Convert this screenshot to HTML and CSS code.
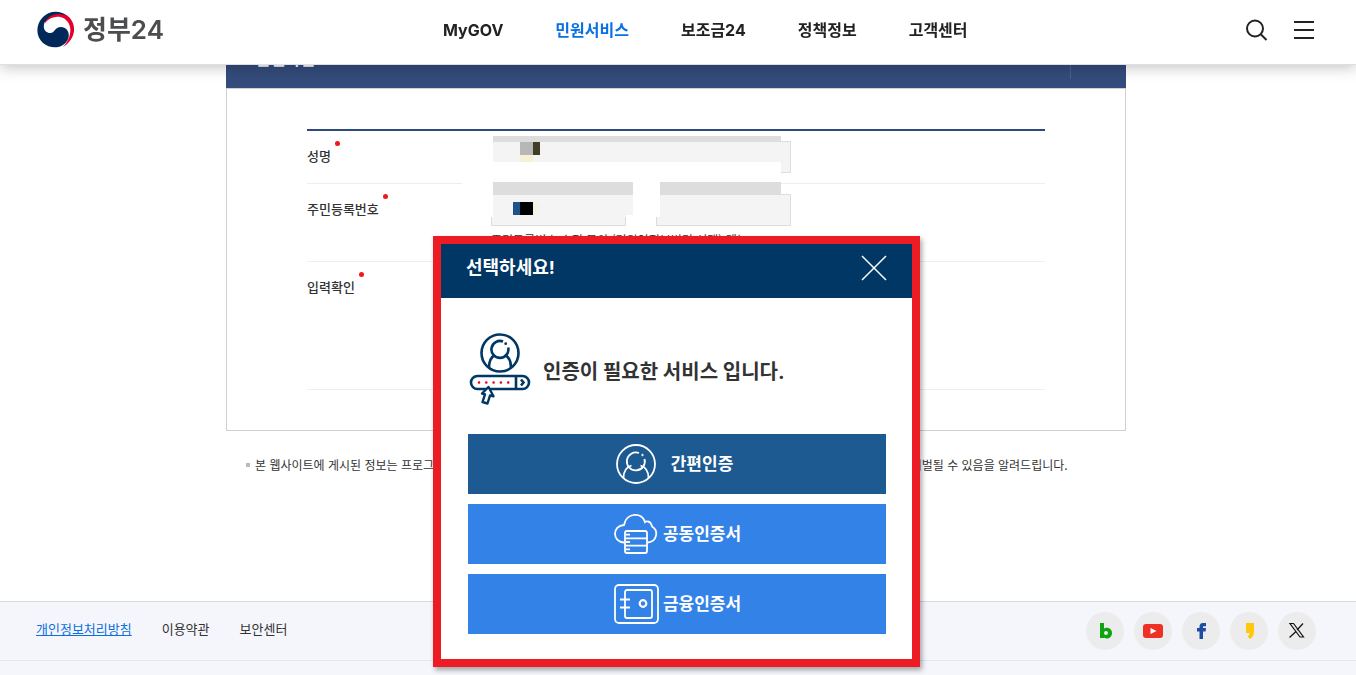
FILE: index.html
```html
<!DOCTYPE html>
<html lang="ko">
<head>
  <meta charset="UTF-8">
  <meta name="viewport" content="width=device-width,initial-scale=1.0">
  <title>정부24</title>
  <link rel="stylesheet" href="styles.css">
</head>
<body>

<header class="header">
  <a class="logo" href="#">
    <svg width="38" height="38" viewBox="0 0 38 38" aria-hidden="true">
      <path fill="#e4002b" d="M8 9C13 1 25-1 32 6c8 8 7 22-6 30 7-7 9-17 6-23C28 4 15 3 8 12z"/>
      <path fill="#00295a" d="M31 6C24-1 13-1 6 6c-8 8-7 20 0 26 7 6 19 6 24-2 4-6 1-14-6-14-7 0-6 7-12 6-6-1-7-9-2-14C15 3 24 1 31 6z"/>
    </svg>
    <span>정부24</span>
  </a>
  <nav class="nav">
    <a href="#">MyGOV</a>
    <a href="#" class="active">민원서비스</a>
    <a href="#">보조금24</a>
    <a href="#">정책정보</a>
    <a href="#">고객센터</a>
  </nav>
  <div class="tools">
    <button type="button" aria-label="검색">
      <svg width="24" height="24" viewBox="0 0 24 24" fill="none" stroke="#222" stroke-width="2"><circle cx="10" cy="10.5" r="8"/><path d="M15.5 16l6 6"/></svg>
    </button>
    <button type="button" aria-label="전체메뉴">
      <svg width="20" height="20" viewBox="0 0 20 20" fill="#222"><path d="M0 1h20v2H0zM0 9h20v2H0zM0 17h20v2H0z"/></svg>
    </button>
  </div>
</header>

<main class="main">
  <section class="panel">
    <h2 class="panel-title">본인확인</h2>
    <form class="panel-body">
      <div class="fields">
        <div class="field">
          <label for="name">성명<i class="req"></i></label>
          <div class="inputs"><input type="text" id="name" readonly></div>
        </div>
        <div class="field field-id">
          <label for="jumin1">주민등록번호<i class="req"></i></label>
          <div>
            <div class="inputs">
              <input type="text" id="jumin1" readonly>
              <input type="text" aria-label="주민등록번호 뒷자리" readonly>
            </div>
            <p class="hint">주민등록번호 수정 문의 (민원인정보변경 선택) 메뉴</p>
          </div>
        </div>
        <div class="field field-check">
          <span class="label">입력확인<i class="req"></i></span>
        </div>
        <!-- masked personal data -->
        <svg class="mask" width="319" height="81" viewBox="0 0 319 81" shape-rendering="crispEdges" aria-hidden="true">
          <path fill="#fff" d="M0 0h319v81H0z"/>
          <path fill="#ddd" d="M31 0h288v6H31zM31 46h140v13H31zM198 46h121v13H198z"/>
          <path fill="#f4f4f4" d="M31 6h288v20H31zM31 59h140v20h-7v2H31zM198 59h121v22H198z"/>
          <path fill="#b7b7b7" d="M58 6h13v13H58z"/>
          <path fill="#403f26" d="M71 6h7v13h-7z"/>
          <path fill="#f6f0d4" d="M58 19h13v7H58z"/>
          <path fill="#1f5288" d="M51 66h7v13h-7z"/>
          <path fill="#000" d="M58 66h13v13H58z"/>
          <path fill="#f4f3ea" d="M71 66h7v13h-7z"/>
        </svg>
      </div>
    </form>
  </section>
  <p class="note">본 웹사이트에 게시된 정보는 프로그램 또는 그 밖의 기술적 장치를 이용하여 무단으로 수집할 수 없고, 이를 위반시 관련 법령에 의해 처벌될 수 있음을 알려드립니다.</p>
</main>

<footer class="footer">
  <div class="footer-row">
    <div class="links">
      <a href="#" class="privacy">개인정보처리방침</a>
      <a href="#">이용약관</a>
      <a href="#">보안센터</a>
    </div>
    <div class="sns">
      <a href="#" aria-label="블로그"><svg width="38" height="38" viewBox="0 0 38 38"><path fill="#0fa30f" fill-rule="evenodd" d="M14 11h4v5.500c4-2 8 .5 8 4.500 0 5-5 7-8 4.500V26h-4zM20 19a2 2 0 1 0 0 4 2 2 0 0 0 0-4z"/></svg></a>
      <a href="#" aria-label="유튜브"><svg width="38" height="38" viewBox="0 0 38 38"><rect x="9" y="12" width="20" height="14" rx="3" fill="#ee3124"/><path fill="#fff" d="M16.500 16l6 3-6 3z"/></svg></a>
      <a href="#" aria-label="페이스북"><svg width="38" height="38" viewBox="0 0 38 38"><path fill="#1c4da1" d="M17.500 27v-7.500H15V16h2.500v-1.500c0-2.500 1.500-3.500 3.500-3.500h3v3.300h-2c-.8 0-1 .4-1 1V16h3l-.4 3.500H21V27z"/></svg></a>
      <a href="#" aria-label="카카오스토리"><svg width="38" height="38" viewBox="0 0 38 38"><path fill="#ffc80a" d="M16 11h8v8.500c0 3.500-1.500 6-4 7.500l-2.500-2.500c1.500-1 2-2 2-3.500H16z"/></svg></a>
      <a href="#" aria-label="X"><svg width="38" height="38" viewBox="0 0 38 38" fill="none" stroke="#111"><path stroke-width="1.200" d="M12 11.500h3.500L25.500 25H22zM25 11.500l-6 6.500M18 19.500L11.500 25.500"/></svg></a>
    </div>
  </div>
</footer>

<div class="overlay">
  <div class="modal" role="dialog" aria-labelledby="modal-title">
    <div class="modal-head">
      <h2 id="modal-title">선택하세요!</h2>
      <button type="button" class="close" aria-label="닫기">
        <svg width="26" height="26" viewBox="0 0 26 26" fill="none" stroke="#fff" stroke-width="1.500"><path d="M1 1l24 24M25 1L1 25"/></svg>
      </button>
    </div>
    <div class="modal-body">
      <div class="modal-msg">
        <svg width="62" height="72" viewBox="0 0 62 72" fill="none" stroke="#003764" stroke-width="2.600" aria-hidden="true">
          <circle cx="31" cy="20" r="18.500"/>
          <path d="M34 8.500A8.500 8.500 0 1 0 39.200 14.500"/>
          <circle cx="36.700" cy="10.700" r=".7" stroke-width="1.400"/>
          <path d="M20 35c0-7 2-11 6-13M42 35c0-7-2-11-6-13"/>
          <rect x="2" y="43" width="58" height="13" rx="6.500"/>
          <path d="M47 43v13M52 46.500l2.500 3-2.500 3"/>
          <path stroke="#e4002b" stroke-width="2.600" stroke-linecap="round" stroke-dasharray="0 7.300" d="M10 49.500h30"/>
          <path fill="#fff" stroke-width="2.400" stroke-linejoin="round" d="M19.500 54L13 60.500l3 .8L13.500 69l5 1.500L21 62.500l3.500.8z"/>
        </svg>
        <p>인증이 필요한 서비스 입니다.</p>
      </div>
      <div class="modal-btns">
        <button type="button" class="btn btn-simple">
          <svg width="42" height="42" viewBox="0 0 42 42" fill="none" stroke="#fff" stroke-width="1.800"><circle cx="21" cy="21" r="19"/><path d="M24 10a9 9 0 1 0 5.500 6"/><circle cx="27.500" cy="12" r=".8" fill="#fff" stroke-width=".8"/><path d="M8.500 35c0-7 3-11 8-12.500M33.500 35c0-7-3-11-8-12.500"/></svg>
          간편인증
        </button>
        <button type="button" class="btn">
          <svg width="46" height="42" viewBox="0 0 46 42" fill="none" stroke="#fff" stroke-width="1.800"><path d="M11 29.500C-1 29-1 12.500 11 12c2-13 19-13 21-3 0 0 1-1 3-.5 3 .5 4 5 4 5 7 4 5 15-4 16"/><rect x="12" y="18" width="22" height="22" rx="2"/><path d="M12 25.300h22M12 32.600h22M13 21.700h4M13 29h4M13 36.300h4"/></svg>
          공동인증서
        </button>
        <button type="button" class="btn">
          <svg width="46" height="42" viewBox="0 0 46 42" fill="none" stroke="#fff" stroke-width="1.800"><rect x="2" y="2" width="43" height="38" rx="4"/><rect x="12" y="7" width="27" height="28" rx="2"/><path d="M7 16.500h10M7 24.500h10"/><circle cx="30" cy="20.500" r="3.300" stroke-width="2.200"/></svg>
          금융인증서
        </button>
      </div>
    </div>
  </div>
</div>

</body>
</html>
```
FILE: styles.css
```css
* { box-sizing:border-box; }
body { margin:0; min-height:100vh; display:flex; flex-direction:column; background:#fff;
  color:#333; font-family:"Noto Sans CJK KR", sans-serif; font-size:13px; }
h2, p { margin:0; }
a { color:inherit; text-decoration:none; }
button { padding:0; border:none; background:none; font-family:inherit; cursor:pointer; }
svg { display:block; flex:none; }

/* Header */
.header { position:fixed; top:0; left:0; right:0; z-index:10; height:65px; padding:0 42px 4px 37px;
  display:flex; align-items:center; background:#fff; border-bottom:1px solid #dcdfe8;
  box-shadow:0 2px 14px rgba(0,0,0,0.25); }
.header, .modal { font-family:Inter, "Noto Sans CJK KR", sans-serif; }
.logo { flex:none; width:406px; display:flex; align-items:center; gap:8px; color:#4c4d4f;
  font-size:26px; line-height:36px; font-weight:600; }
.nav { display:flex; gap:52px; font-size:16px; line-height:24px; font-weight:700; color:#222; }
.nav .active { color:#0b70e5; }
.tools { display:flex; align-items:center; gap:25px; margin-left:auto; }

/* Form panel */
.main { padding:28px 4px 126px 0; }
.panel { max-width:900px; margin:0 auto; }
.panel-title { display:flex; justify-content:space-between; height:60px; padding:0 55px 0 30px;
  background:#344c7b; color:#fff; font-size:16px; line-height:60px; }
.panel-title::after { content:""; width:1px; height:51px; background:#4b618b; }
.panel-body { padding:40px 80px; border:1px solid #d0d0d0; }
.fields { position:relative; border-top:2px solid #2f4a7c; }
.field { display:flex; height:53px; border-bottom:1px solid #eee; }
.field-id { height:78px; }
.field-check { height:128px; }
.field label, .label { flex:none; width:184px; display:flex; gap:4px; line-height:50px; font-weight:500; }
.req { width:5px; height:5px; margin-top:10px; border-radius:50%; background:#f01818; }
.inputs { display:flex; gap:30px; width:300px; padding-top:10px; }
.inputs input { flex:1; min-width:0; height:32px; border:1px solid #ddd; background:#f4f4f4; }
.hint { padding-top:4px; font-size:12px; line-height:20px; white-space:nowrap; }
.mask { position:absolute; left:155px; top:5px; }
.note { max-width:860px; margin:24px auto 0; display:flex; align-items:center; gap:5px;
  font-size:12px; line-height:20px; white-space:nowrap; }
.note::before { content:""; width:4px; height:4px; background:#bbb; }

/* Footer */
.footer { flex:1; border-top:1px solid #d5dadb; background:#f5f6fb; }
.footer-row { display:flex; align-items:center; justify-content:space-between; height:59px;
  padding:0 40px 0 36px; border-bottom:1px solid #e4e6ea; }
.links { display:flex; gap:30px; padding-bottom:4px; line-height:20px; }
.privacy { color:#0b6fe0; text-decoration:underline; }
.sns { display:flex; gap:10px; }
.sns a { border-radius:50%; background:#ececec; }

/* Modal */
.overlay { position:absolute; top:236px; left:0; right:3px; z-index:20; display:flex; justify-content:center; }
.modal { width:487px; border:8px solid #ed1c24; background:#fff; box-shadow:2px 3px 5px rgba(0,0,0,0.35); }
.modal-head { height:54px; padding:0 25px 6px; display:flex; align-items:center;
  justify-content:space-between; background:#003764; color:#fff; }
.modal-head h2 { font-size:18px; line-height:28px; }
.modal-body { padding:0 26px 25px 27px; }
.modal-msg { height:136px; padding:6px 0 0 1px; display:flex; align-items:center; gap:12px;
  font-size:20px; line-height:30px; font-weight:700; }
.modal-msg p { padding-top:6px; }
.modal-btns { display:flex; flex-direction:column; gap:10px; }
.btn { height:60px; display:flex; align-items:center; justify-content:center; gap:4px;
  background:#3382e8; color:#fff; font-size:17px; line-height:24px; font-weight:700; }
.btn-simple { gap:14px; padding-right:6px; background:#1d5a92; }
```
